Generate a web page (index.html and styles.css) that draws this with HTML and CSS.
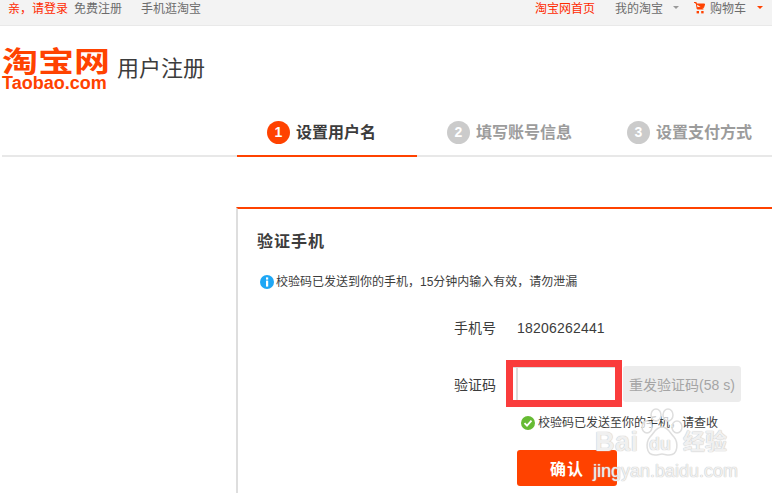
FILE: index.html
```html
<!DOCTYPE html>
<html lang="zh-CN">
<head>
    <meta charset="UTF-8">
    <title>用户注册</title>
    <link rel="stylesheet" href="styles.css">
</head>
<body>
    <!-- top bar -->
    <div class="topbar">
        <div class="top-left">
            <a class="red login" href="#">亲，请登录</a>
            <a class="reg" href="#">免费注册</a>
            <a class="mobile" href="#">手机逛淘宝</a>
        </div>
        <div class="top-right">
            <a class="red home" href="#">淘宝网首页</a>
            <a class="mine" href="#">我的淘宝<span class="caret"></span></a>
            <a class="cart" href="#">
                <svg class="cart-icon" width="11" height="12" viewBox="0 0 11 12"><path d="M0 0.5h2.2l1 6.5h6.2M2.6 2h8l-1 3.6H3.2" fill="#ff4200" stroke="#ff4200"/><rect x="2.6" y="9" width="2.4" height="2.4" fill="#ff4200"/><rect x="7.2" y="9" width="2.4" height="2.4" fill="#ff4200"/></svg>购物车<span class="caret caret-red"></span>
            </a>
        </div>
    </div>

    <!-- logo -->
    <div class="header">
        <div class="logo">
            <div class="logo-cn">淘宝网</div>
            <div class="logo-en">Taobao.com</div>
        </div>
        <div class="page-title">用户注册</div>
    </div>

    <!-- steps -->
    <div class="steps">
        <div class="step active"><span class="num">1</span>设置用户名</div>
        <div class="step"><span class="num">2</span>填写账号信息</div>
        <div class="step"><span class="num">3</span>设置支付方式</div>
    </div>

    <!-- form -->
    <div class="panel">
        <h2>验证手机</h2>
        <p class="notice">
            <svg width="14" height="14" viewBox="0 0 14 14"><circle cx="7" cy="7" r="7" fill="#1ea7f5"/><rect x="6" y="2.4" width="2.2" height="2.2" fill="#fff"/><rect x="6" y="5.6" width="2.2" height="6" fill="#fff"/></svg>
            校验码已发送到你的手机，15分钟内输入有效，请勿泄漏
        </p>
        <div class="row phone-row">
            <label>手机号</label>
            <span class="phone">18206262441</span>
        </div>
        <div class="row code-row">
            <label>验证码</label>
            <div class="mark"><input type="text"></div>
            <button class="resend" type="button">重发验证码(58 s)</button>
        </div>
        <p class="sent">
            <svg width="14" height="14" viewBox="0 0 14 14"><circle cx="7" cy="7" r="7" fill="#66bb33"/><path d="M3.5 7.2l2.5 2.5 4.5-5" fill="none" stroke="#fff" stroke-width="1.8"/></svg>
            校验码已发送至你的手机，请查收
        </p>
        <button class="confirm" type="button">确认</button>
    </div>

    <!-- watermark over the screenshot -->
    <div class="watermark">
        <svg class="paw" width="44" height="50" viewBox="0 0 44 50"><g fill="#fff" fill-opacity="0.7" stroke="#dedede" stroke-width="1.5"><ellipse cx="7" cy="19" rx="5" ry="6"/><ellipse cx="16" cy="7" rx="5" ry="6"/><ellipse cx="28" cy="7" rx="5" ry="6"/><ellipse cx="37" cy="19" rx="5" ry="6"/><path d="M22 19c-6 0-8 6-12 10-4 5-5 18 5 18 3 0 5-1 7-1s4 1 7 1c10 0 9-13 5-18-4-4-6-10-12-10z"/></g></svg>
        <div class="wm-bai">Bai</div>
        <div class="wm-du">du</div>
        <div class="wm-cn">经验</div>
        <div class="wm-sub">jingyan.baidu.com</div>
    </div>
</body>
</html>
```

FILE: styles.css
```css
* {
    box-sizing: border-box;
}
html, body {
    height: 493px;
    overflow: hidden;
}
body {
    margin: 0;
    background-color: #fff;
    color: #3c3c3c;
    font-family: "Liberation Sans", "Noto Sans CJK SC", sans-serif;
    font-size: 12px;
    position: relative;
}
a {
    color: #6c6c6c;
    text-decoration: none;
}
a.red {
    color: #ff2a00;
}

.topbar {
    height: 26px;
    padding: 0 0 0 8px;
    background-color: #f3f3f3;
    border-bottom: 1px solid #e9e9e9;
    display: flex;
    justify-content: space-between;
    line-height: 18px;
}
.top-left, .top-right {
    display: flex;
}
.reg {
    margin-left: 6px;
}
.mobile {
    margin-left: 19px;
}
.top-right {
    padding-right: 9px;
}
.mine {
    margin-left: 20px;
    display: flex;
    align-items: flex-start;
}
.cart {
    margin-left: 15px;
    display: flex;
    align-items: flex-start;
}
.cart-icon {
    margin: 2px 5px 0 0;
}
.caret {
    display: block;
    width: 0;
    height: 0;
    margin: 6px 0 0 10px;
    border: 3px solid transparent;
    border-top-color: #999;
    border-bottom: 0;
}
.caret-red {
    border-top-color: #ff4200;
    margin-left: 11px;
}

.header {
    height: 95px;
    padding: 22px 0 0 2px;
    display: flex;
    align-items: flex-start;
}
.logo {
    width: 106px;
    color: #ff4200;
    font-weight: bold;
}
.logo-cn {
    font-size: 36px;
    line-height: 28px;
    white-space: nowrap;
    transform: scaleY(0.8);
}
.logo-en {
    font-size: 18px;
    line-height: 14px;
}
.page-title {
    margin: 5px 0 0 9px;
    font-size: 22px;
    line-height: 32px;
    color: #3c3c3c;
}

.steps {
    height: 36px;
    margin-left: 2px;
    padding-left: 235px;
    border-bottom: 2px solid #e8e8e8;
    display: flex;
    font-size: 16px;
    font-weight: bold;
    color: #9c9c9c;
}
.step {
    flex: none;
    width: 180px;
    height: 36px;
    padding-left: 30px;
    display: flex;
    align-items: flex-start;
    line-height: 23px;
    white-space: nowrap;
}
.step.active {
    color: #3c3c3c;
    border-bottom: 2px solid #ff4200;
}
.num {
    width: 23px;
    height: 23px;
    margin-right: 6px;
    border-radius: 50%;
    background-color: #cbcbcb;
    color: #fff;
    text-align: center;
    font-size: 14px;
    flex: none;
}
.active .num {
    background-color: #ff4200;
}

.panel {
    margin: 50px 0 0 236px;
    padding: 0 0 0 19px;
    height: 300px;
    border-top: 2px solid #ff4200;
    border-left: 2px solid #dedede;
}
.panel h2 {
    margin: 0;
    padding-top: 23px;
    font-size: 16px;
    letter-spacing: 1px;
    line-height: 20px;
    color: #3c3c3c;
}
.notice {
    margin: 22px 0 0 3px;
    line-height: 16px;
    display: flex;
    align-items: center;
    gap: 2px;
    color: #3c3c3c;
}
.row {
    display: flex;
    align-items: center;
    font-size: 14px;
}
.row label {
    width: 239px;
    text-align: right;
    color: #3c3c3c;
}
.phone-row {
    margin-top: 28px;
    line-height: 20px;
}
.phone {
    margin-left: 21px;
    font-size: 14px;
    letter-spacing: 0.2px;
}
.code-row {
    margin-top: 22px;
}
.mark {
    width: 116px;
    height: 47px;
    margin-left: 10px;
    border: 7px solid #fa3c3c;
}
.mark input {
    display: block;
    width: 100%;
    height: 33px;
    padding: 0;
    border: 0;
    border-top: 1px solid #dcdcdc;
    background: linear-gradient(#dcdcdc, #dcdcdc) 3px 0 / 2px 100% no-repeat #fff;
    outline: none;
}
.resend {
    width: 118px;
    height: 36px;
    margin-left: 1px;
    padding: 0;
    border: 0;
    border-radius: 3px;
    background-color: #ececec;
    color: #a5a5a5;
    font-family: inherit;
    font-size: 14px;
}
.sent {
    margin: 8px 0 0 264px;
    line-height: 16px;
    display: flex;
    align-items: center;
    gap: 3px;
    white-space: nowrap;
}
.confirm {
    display: block;
    width: 100px;
    height: 36px;
    margin: 19px 0 0 260px;
    padding: 0;
    border: 0;
    border-radius: 3px;
    background-color: #ff4200;
    color: #fff;
    font-family: inherit;
    font-size: 16px;
    font-weight: bold;
    letter-spacing: 1px;
}

.watermark {
    position: absolute;
    left: 590px;
    top: 405px;
    width: 180px;
    height: 75px;
    pointer-events: none;
}
.paw {
    position: absolute;
    left: 50px;
    top: 3px;
}
.wm-bai, .wm-du, .wm-cn, .wm-sub {
    position: absolute;
    white-space: nowrap;
    color: rgba(255, 255, 255, 0.75);
    text-shadow: 0 0 1px #c4c4c4, 0 0 1px #c4c4c4;
}
.wm-bai {
    left: 5px;
    top: 22px;
    font-size: 27px;
    line-height: 30px;
    font-weight: bold;
    letter-spacing: 0.5px;
}
.wm-du {
    left: 59px;
    top: 28px;
    font-size: 18px;
    line-height: 22px;
    font-weight: bold;
}
.wm-cn {
    left: 93px;
    top: 24px;
    font-size: 22px;
    line-height: 26px;
    font-weight: bold;
}
.wm-sub {
    left: 3px;
    top: 55px;
    font-size: 18px;
    line-height: 22px;
}
```
